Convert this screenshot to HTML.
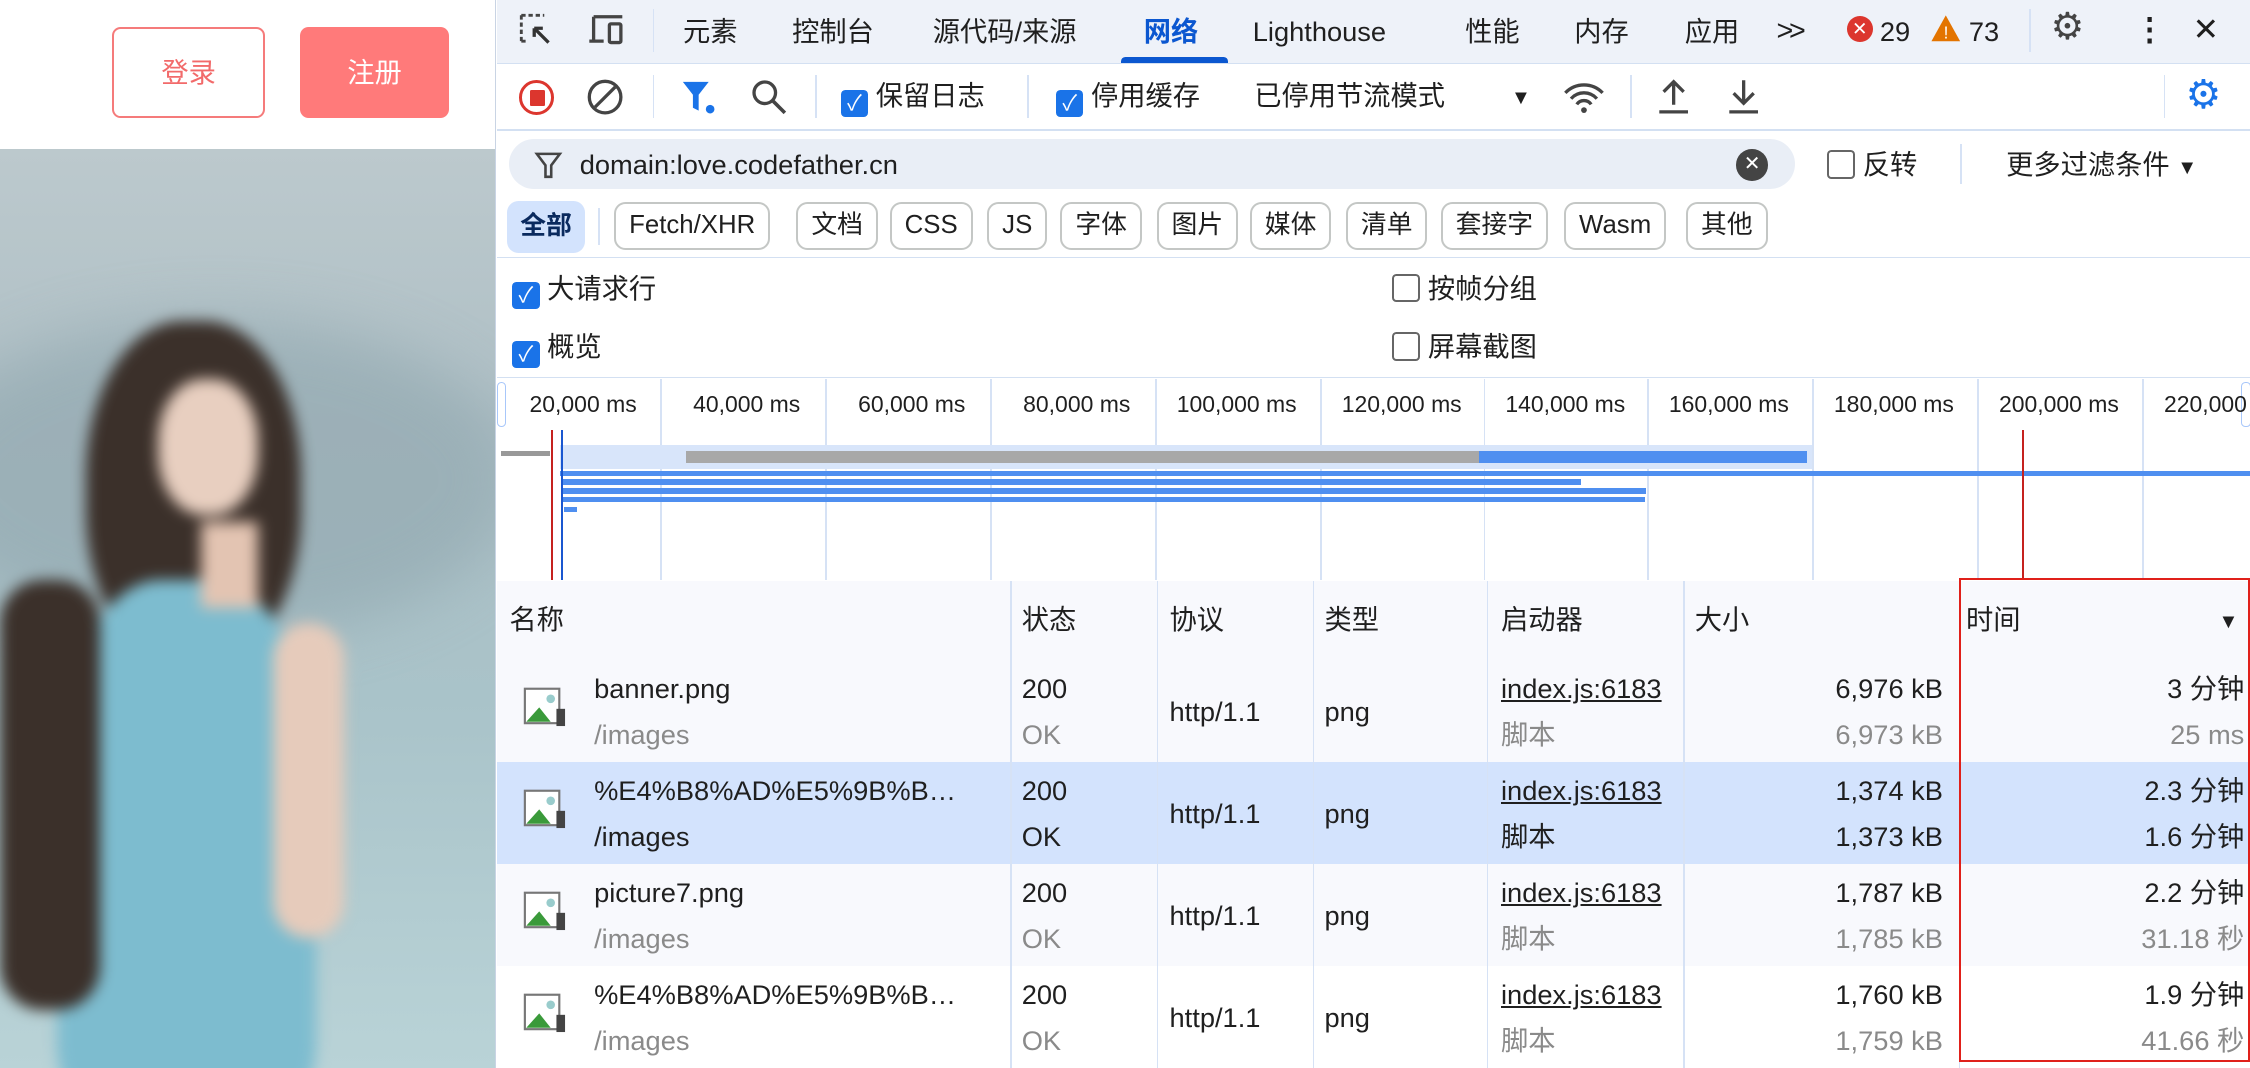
<!DOCTYPE html>
<html><head><meta charset="utf-8"><style>
html,body{margin:0;padding:0;width:2250px;height:1068px;overflow:hidden;background:#fff}
#w{position:absolute;left:0;top:0;width:1568px;height:744px;zoom:1.435;font-family:"Liberation Sans","Noto Sans CJK SC",sans-serif;color:#1f1f1f;font-size:19px;line-height:22px}
#w *{line-height:inherit}
.a{position:absolute}
.btn{position:absolute;top:19px;height:63px;border-radius:6px;font-size:19px;display:flex;align-items:center;justify-content:center}
.tab{position:absolute;top:11px;font-size:19px;color:#1f1f1f}
.cb{display:inline-block;width:19px;height:19px;background:#1a73e8;border-radius:3px;color:#fff;font-size:15px;text-align:center;line-height:19px !important;vertical-align:-3px}
.cbo{display:inline-block;width:17px;height:17px;border:1.5px solid #666;border-radius:3px;vertical-align:-3px;background:#fff}
.chip{position:absolute;top:141px;height:33px;border:1.5px solid #c4c7c5;border-radius:8px;box-sizing:border-box;font-size:18px;line-height:30px !important;padding:0 9px}
.vl{position:absolute;width:1px;background:#d6e2f5}
.row{position:absolute;left:346px;width:1222px;height:71px}
.c{position:absolute;font-size:19px}
.g{color:#8a8a8a}
</style></head><body><div id="w">
<div class="a" style="left:0;top:0;width:345px;height:104px;background:#fff"></div>
<div class="btn" style="left:78px;width:107px;border:2px solid #f57b7b;box-sizing:border-box;color:#f26a6a">登录</div>
<div class="btn" style="left:209px;width:104px;background:#ff7a7a;color:#fff">注册</div>
<div class="a" style="left:0;top:104px;width:345px;height:640px;background:linear-gradient(180deg,#bcc9cd 0%,#aebfc5 30%,#a9c3c9 60%,#b9d3d7 100%);overflow:hidden">
 <div style="position:absolute;left:0;top:0;width:345px;height:640px;filter:blur(5px)">
 <div class="a" style="left:-60px;top:120px;width:420px;height:220px;border-radius:50%;background:#8fa6ae;opacity:.6;filter:blur(20px)"></div>
 <div class="a" style="left:60px;top:120px;width:150px;height:240px;border-radius:45%;background:#3b302a"></div>
 <div class="a" style="left:110px;top:160px;width:70px;height:95px;border-radius:45%;background:#e8cfc0"></div>
 <div class="a" style="left:40px;top:300px;width:180px;height:360px;border-radius:40% 40% 10% 10%;background:#7dbccf"></div>
 <div class="a" style="left:140px;top:260px;width:40px;height:60px;background:#e3c4b2"></div>
 <div class="a" style="left:190px;top:330px;width:50px;height:220px;border-radius:30px;background:#e6cbbb"></div>
 <div class="a" style="left:0;top:300px;width:70px;height:300px;border-radius:30px;background:#3b302a"></div>
 </div>
</div>
<div class="a" style="left:345px;top:0;width:1223px;height:744px;background:#fff;border-left:1px solid #c9d4e4"></div>
<div class="a" style="left:346px;top:0;width:1222px;height:44px;background:#eef2f9;border-bottom:1px solid #d3e0f2"></div>
<svg class="a" style="left:360px;top:8px" width="30" height="28" viewBox="0 0 30 28"><path d="M3 3h16M3 3v18M3 21h4" stroke="#444" stroke-width="2" stroke-dasharray="3 2" fill="none"/><path d="M12 12l10 10M12 12h6M12 12v6" stroke="#333" stroke-width="2.3" fill="none"/></svg>
<svg class="a" style="left:408px;top:8px" width="30" height="28" viewBox="0 0 30 28"><path d="M6 4h20M6 4v16M3 21h10" stroke="#444" stroke-width="2.3" fill="none"/><rect x="17" y="9" width="8" height="13" rx="1" stroke="#444" stroke-width="2.3" fill="none"/></svg>
<div class="vl" style="left:455px;top:6px;height:30px"></div>
<div class="tab" style="left:476px">元素</div>
<div class="tab" style="left:552px">控制台</div>
<div class="tab" style="left:650px">源代码/来源</div>
<div class="tab" style="left:797px;color:#0b57d0;font-weight:bold">网络</div>
<div class="a" style="left:781px;top:40px;width:75px;height:4px;background:#0b57d0;border-radius:3px 3px 0 0"></div>
<div class="tab" style="left:873px">Lighthouse</div>
<div class="tab" style="left:1021px">性能</div>
<div class="tab" style="left:1097px">内存</div>
<div class="tab" style="left:1174px">应用</div>
<div class="tab" style="left:1238px;font-size:20px;letter-spacing:-3px">&gt;&gt;</div>
<div class="a" style="left:1287px;top:11px;width:18px;height:18px;border-radius:50%;background:#dc362e;color:#fff;font-size:13px;text-align:center;line-height:18px">✕</div>
<div class="tab" style="left:1310px">29</div>
<svg class="a" style="left:1345px;top:10px" width="22" height="20"><path d="M11 1L21 19H1Z" fill="#e37400"/><text x="9.5" y="17" fill="#fff" font-size="12" font-family="Liberation Sans">!</text></svg>
<div class="tab" style="left:1372px">73</div>
<div class="vl" style="left:1414px;top:6px;height:30px"></div>
<div class="tab" style="left:1429px;font-size:26px;top:8px;color:#444">⚙</div>
<div class="tab" style="left:1487px;font-size:22px;top:10px;font-weight:bold">⋮</div>
<div class="tab" style="left:1528px;font-size:22px;top:10px">✕</div>
<div class="a" style="left:346px;top:90px;width:1222px;height:1px;background:#d3e0f2"></div>
<div class="a" style="left:362px;top:56px;width:20px;height:20px;border:2.5px solid #dc362e;border-radius:50%"></div>
<div class="a" style="left:369px;top:63px;width:11px;height:11px;background:#dc362e;border-radius:1px"></div>
<svg class="a" style="left:408px;top:54px" width="28" height="28"><circle cx="14" cy="14" r="11" stroke="#444" stroke-width="2.3" fill="none"/><path d="M7 21L21 7" stroke="#444" stroke-width="2.3"/></svg>
<div class="vl" style="left:455px;top:52px;height:30px"></div>
<svg class="a" style="left:474px;top:55px" width="30" height="26"><path d="M2 2h18l-7 9v11l-4-2V11Z" fill="#1a73e8"/><circle cx="21" cy="21" r="3" fill="#1a73e8"/></svg>
<svg class="a" style="left:522px;top:54px" width="28" height="28"><circle cx="11" cy="11" r="7.5" stroke="#444" stroke-width="2.3" fill="none"/><path d="M16.5 16.5L25 25" stroke="#444" stroke-width="2.5"/></svg>
<div class="vl" style="left:568px;top:52px;height:30px"></div>
<div class="a" style="left:586px;top:56px"><span class="cb">✓</span> 保留日志</div>
<div class="vl" style="left:716px;top:52px;height:30px"></div>
<div class="a" style="left:736px;top:56px"><span class="cb">✓</span> 停用缓存</div>
<div class="a" style="left:874px;top:56px">已停用节流模式</div>
<div class="a" style="left:1053px;top:58px;font-size:14px">▼</div>
<svg class="a" style="left:1088px;top:56px" width="32" height="24"><path d="M3 9a18 18 0 0 1 26 0M7 13a12 12 0 0 1 18 0M11 17a6 6 0 0 1 10 0" stroke="#444" stroke-width="2.3" fill="none"/><circle cx="16" cy="21" r="2" fill="#444"/></svg>
<div class="vl" style="left:1136px;top:52px;height:30px"></div>
<svg class="a" style="left:1153px;top:53px" width="26" height="28"><path d="M13 20V4M6 11l7-7 7 7M3 25h20" stroke="#444" stroke-width="2.3" fill="none"/></svg>
<svg class="a" style="left:1202px;top:53px" width="26" height="28"><path d="M13 3v16M6 12l7 7 7-7M3 25h20" stroke="#444" stroke-width="2.3" fill="none"/></svg>
<div class="vl" style="left:1508px;top:52px;height:30px"></div>
<div class="a" style="left:1523px;top:55px;font-size:28px;color:#1a73e8">⚙</div>
<div class="a" style="left:355px;top:97px;width:896px;height:35px;background:#e9eef6;border-radius:18px"></div>
<svg class="a" style="left:372px;top:105px" width="20" height="20"><path d="M2 2h16l-6 8v8h-4v-8Z" stroke="#444" stroke-width="1.8" fill="none"/></svg>
<div class="a" style="left:404px;top:104px">domain:love.codefather.cn</div>
<div class="a" style="left:1210px;top:104px;width:22px;height:22px;background:#444;border-radius:50%;color:#fff;font-size:14px;text-align:center;line-height:22px">✕</div>
<div class="a" style="left:1273px;top:104px"><span class="cbo"></span> 反转</div>
<div class="vl" style="left:1366px;top:100px;height:28px"></div>
<div class="a" style="left:1398px;top:104px">更多过滤条件 <span style="font-size:14px">▼</span></div>
<div class="a" style="left:353px;top:140px;width:55px;height:36px;background:#d3e3fd;border-radius:8px;color:#0a2a5e;font-weight:bold;font-size:18px;line-height:36px !important;text-align:center">全部</div>
<div class="vl" style="left:417px;top:145px;height:26px"></div>
<div class="chip" style="left:428px">Fetch/XHR</div>
<div class="chip" style="left:555px">文档</div>
<div class="chip" style="left:620px">CSS</div>
<div class="chip" style="left:688px">JS</div>
<div class="chip" style="left:739px">字体</div>
<div class="chip" style="left:806px">图片</div>
<div class="chip" style="left:871px">媒体</div>
<div class="chip" style="left:938px">清单</div>
<div class="chip" style="left:1004px">套接字</div>
<div class="chip" style="left:1090px">Wasm</div>
<div class="chip" style="left:1175px">其他</div>
<div class="a" style="left:346px;top:179px;width:1222px;height:1px;background:#d3e0f2"></div>
<div class="a" style="left:357px;top:190px"><span class="cb">✓</span> 大请求行</div>
<div class="a" style="left:357px;top:231px"><span class="cb">✓</span> 概览</div>
<div class="a" style="left:970px;top:190px"><span class="cbo"></span> 按帧分组</div>
<div class="a" style="left:970px;top:231px"><span class="cbo"></span> 屏幕截图</div>
<div class="a" style="left:346px;top:263px;width:1222px;height:141px;border-top:1px solid #d3e0f2;border-bottom:2px solid #d3e0f2"></div>
<div class="a" style="left:346px;top:266px;width:5px;height:30px;border:1px solid #a8c7fa;border-radius:3px"></div>
<div class="a" style="left:1562px;top:266px;width:5px;height:30px;border:1px solid #a8c7fa;border-radius:3px"></div>
<div class="vl" style="left:460px;top:264px;height:140px"></div>
<div class="vl" style="left:575px;top:264px;height:140px"></div>
<div class="vl" style="left:690px;top:264px;height:140px"></div>
<div class="vl" style="left:805px;top:264px;height:140px"></div>
<div class="vl" style="left:920px;top:264px;height:140px"></div>
<div class="vl" style="left:1034px;top:264px;height:140px"></div>
<div class="vl" style="left:1148px;top:264px;height:140px"></div>
<div class="vl" style="left:1263px;top:264px;height:140px"></div>
<div class="vl" style="left:1378px;top:264px;height:140px"></div>
<div class="vl" style="left:1493px;top:264px;height:140px"></div>
<div class="a" style="left:369px;top:271px;font-size:16px">20,000 ms</div>
<div class="a" style="left:483px;top:271px;font-size:16px">40,000 ms</div>
<div class="a" style="left:598px;top:271px;font-size:16px">60,000 ms</div>
<div class="a" style="left:713px;top:271px;font-size:16px">80,000 ms</div>
<div class="a" style="left:820px;top:271px;font-size:16px">100,000 ms</div>
<div class="a" style="left:935px;top:271px;font-size:16px">120,000 ms</div>
<div class="a" style="left:1049px;top:271px;font-size:16px">140,000 ms</div>
<div class="a" style="left:1163px;top:271px;font-size:16px">160,000 ms</div>
<div class="a" style="left:1278px;top:271px;font-size:16px">180,000 ms</div>
<div class="a" style="left:1393px;top:271px;font-size:16px">200,000 ms</div>
<div class="a" style="left:1508px;top:271px;font-size:16px">220,000</div>
<div class="a" style="left:390px;top:310px;width:873px;height:17px;background:#d8e5fa"></div>
<div class="a" style="left:349px;top:314px;width:34px;height:4px;background:#999"></div>
<div class="a" style="left:478px;top:314px;width:553px;height:9px;background:#a8a8a8"></div>
<div class="a" style="left:1031px;top:314px;width:228px;height:9px;background:#4f8ff0"></div>
<div class="a" style="left:390px;top:328px;width:1178px;height:4px;background:#4f8ff0"></div>
<div class="a" style="left:392px;top:334px;width:710px;height:4px;background:#4f8ff0"></div>
<div class="a" style="left:392px;top:340px;width:755px;height:4px;background:#4f8ff0"></div>
<div class="a" style="left:392px;top:346px;width:754px;height:4px;background:#4f8ff0"></div>
<div class="a" style="left:393px;top:353px;width:9px;height:4px;background:#4f8ff0"></div>
<div class="a" style="left:384px;top:300px;width:1.5px;height:104px;background:#c5221f"></div>
<div class="a" style="left:391px;top:300px;width:1.5px;height:104px;background:#1a57d0"></div>
<div class="a" style="left:1409px;top:300px;width:1.5px;height:104px;background:#c5221f"></div>
<div class="a" style="left:346px;top:405px;width:1222px;height:55px;background:#f8f9fd;border-bottom:1px solid #d3e0f2"></div>
<div class="c" style="left:355px;top:421px">名称</div>
<div class="c" style="left:712px;top:421px">状态</div>
<div class="c" style="left:815px;top:421px">协议</div>
<div class="c" style="left:923px;top:421px">类型</div>
<div class="c" style="left:1046px;top:421px">启动器</div>
<div class="c" style="left:1181px;top:421px">大小</div>
<div class="c" style="left:1370px;top:421px">时间</div>
<div class="a" style="left:1546px;top:423px;font-size:14px">▼</div>
<div class="row" style="top:460px;background:#f8f9fd"></div>
<div class="row" style="top:531px;background:#d3e3fd"></div>
<div class="row" style="top:602px;background:#f8f9fd"></div>
<div class="row" style="top:673px;background:#fff"></div>
<div class="vl" style="left:704px;top:405px;height:339px"></div>
<div class="vl" style="left:806px;top:405px;height:339px"></div>
<div class="vl" style="left:915px;top:405px;height:339px"></div>
<div class="vl" style="left:1036px;top:405px;height:339px"></div>
<div class="vl" style="left:1173px;top:405px;height:339px"></div>
<div class="vl" style="left:1365px;top:405px;height:339px"></div>
<div id="rows"></div>
<div class="a" style="left:1365px;top:403px;width:200px;height:334px;border:2px solid #e0201a"></div>
</div>
<script>
var d=[["banner.png","/images",0,"6,976 kB","6,973 kB","3 分钟","25 ms"],["%E4%B8%AD%E5%9B%B…","/images",1,"1,374 kB","1,373 kB","2.3 分钟","1.6 分钟"],["picture7.png","/images",0,"1,787 kB","1,785 kB","2.2 分钟","31.18 秒"],["%E4%B8%AD%E5%9B%B…","/images",0,"1,760 kB","1,759 kB","1.9 分钟","41.66 秒"]];
var h="";
d.forEach(function(r,i){var t=460+i*71,g=r[2]?"":" g";
h+='<svg class="a" style="left:364px;top:'+(t+16)+'px" width="32" height="32"><rect x="2" y="4" width="24" height="24" fill="#fff" stroke="#777" stroke-width="1.5"/><path d="M3 27l9-10 8 10Z" fill="#3a9a3a"/><circle cx="20" cy="11" r="3" fill="#9cc"/><rect x="24" y="18" width="6" height="12" fill="#444"/></svg>';
h+='<div class="c" style="left:414px;top:'+(t+9)+'px">'+r[0]+'</div><div class="c'+g+'" style="left:414px;top:'+(t+41)+'px">'+r[1]+'</div>';
h+='<div class="c" style="left:712px;top:'+(t+9)+'px">200</div><div class="c'+g+'" style="left:712px;top:'+(t+41)+'px">OK</div>';
h+='<div class="c" style="left:815px;top:'+(t+25)+'px">http/1.1</div><div class="c" style="left:923px;top:'+(t+25)+'px">png</div>';
h+='<div class="c" style="left:1046px;top:'+(t+9)+'px;width:126px;overflow:hidden;white-space:nowrap;text-decoration:underline">index.js:6183</div><div class="c'+g+'" style="left:1046px;top:'+(t+41)+'px">脚本</div>';
h+='<div class="c" style="left:1180px;width:174px;text-align:right;top:'+(t+9)+'px">'+r[3]+'</div><div class="c'+g+'" style="left:1180px;width:174px;text-align:right;top:'+(t+41)+'px">'+r[4]+'</div>';
h+='<div class="c" style="left:1370px;width:194px;text-align:right;top:'+(t+9)+'px">'+r[5]+'</div><div class="c'+g+'" style="left:1370px;width:194px;text-align:right;top:'+(t+41)+'px">'+r[6]+'</div>';});
document.getElementById("rows").outerHTML=h;
</script>
</body></html>
